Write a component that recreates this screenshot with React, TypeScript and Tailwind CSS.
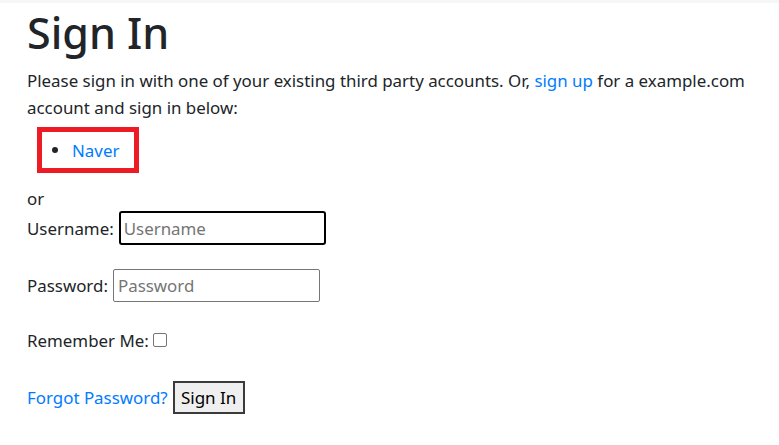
import React from "react";

const FONT = { fontFamily: '"Noto Sans", "Open Sans", sans-serif' };

export default function App() {
  return (
    <div className="min-h-[445px] bg-white text-[#212529]" style={FONT}>
      <div className="h-[3px] bg-[#f6f7f9]" />
      <main className="px-[27px] text-[16.9px] leading-[27px]">
        <h1 className="mt-[4px] mb-[8px] text-[43px] font-medium leading-[52px]">Sign In</h1>
        <p>
          Please sign in with one of your existing third party accounts. Or,{" "}
          <a href="#" className="text-[#007bff]">
            sign up
          </a>{" "}
          for a example.com account and sign in below:
        </p>

        <div className="mt-[6px] ml-[10px] inline-flex h-[46px] items-center border-[5px] border-[#ed1c24] pl-[10px] pr-[15px]">
          <span className="h-[6px] w-[6px] rounded-full bg-[#212529]" />
          <a href="#" className="ml-[14px] text-[#007bff]">
            Naver
          </a>
        </div>

        <div className="mt-[12px]">or</div>

        <form className="-mt-[1px]" onSubmit={(e) => e.preventDefault()}>
          <div className="flex h-[34px] items-center">
            <label>Username:</label>
            <input
              placeholder="Username"
              className="ml-[5px] h-[34px] w-[207px] rounded-[3px] border-2 border-black px-[3px] text-[16.9px] placeholder:text-[#757575] outline-none"
            />
          </div>
          <div className="mt-[23px] flex h-[34px] items-center">
            <label>Password:</label>
            <input
              type="password"
              placeholder="Password"
              className="ml-[5px] h-[33px] w-[207px] rounded-[2px] border border-[#767676] px-[4px] text-[16.9px] placeholder:text-[#757575] outline-none"
            />
          </div>
          <div className="mt-[21px] flex h-[34px] items-center">
            <label>Remember Me:</label>
            <span className="ml-[4px] inline-block h-[14px] w-[14px] rounded-[2px] border border-[#767676] bg-white" />
          </div>
          <div className="mt-[23px] flex h-[34px] items-center">
            <a href="#" className="text-[#007bff]">
              Forgot Password?
            </a>
            <button
              type="submit"
              className="ml-[5px] h-[33px] w-[72px] border-2 border-[#3b3b3b] bg-[#efefef] text-[17px] text-black"
            >
              Sign In
            </button>
          </div>
        </form>
      </main>
    </div>
  );
}
